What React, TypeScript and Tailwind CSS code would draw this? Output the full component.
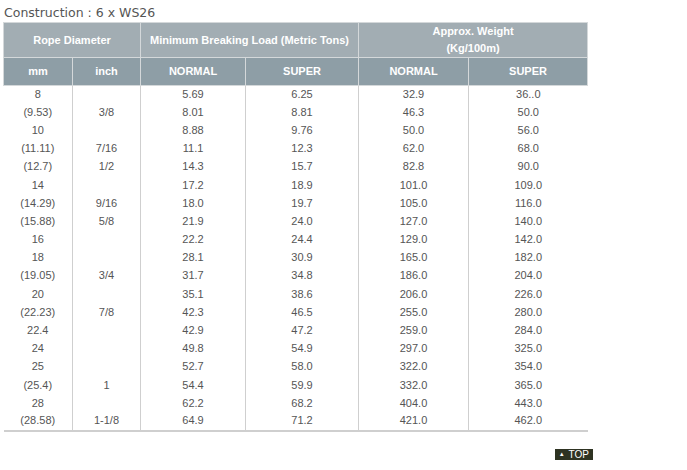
const rows: [string, string, string, string, string, string][] = [
  ["8", "", "5.69", "6.25", "32.9", "36..0"],
  ["(9.53)", "3/8", "8.01", "8.81", "46.3", "50.0"],
  ["10", "", "8.88", "9.76", "50.0", "56.0"],
  ["(11.11)", "7/16", "11.1", "12.3", "62.0", "68.0"],
  ["(12.7)", "1/2", "14.3", "15.7", "82.8", "90.0"],
  ["14", "", "17.2", "18.9", "101.0", "109.0"],
  ["(14.29)", "9/16", "18.0", "19.7", "105.0", "116.0"],
  ["(15.88)", "5/8", "21.9", "24.0", "127.0", "140.0"],
  ["16", "", "22.2", "24.4", "129.0", "142.0"],
  ["18", "", "28.1", "30.9", "165.0", "182.0"],
  ["(19.05)", "3/4", "31.7", "34.8", "186.0", "204.0"],
  ["20", "", "35.1", "38.6", "206.0", "226.0"],
  ["(22.23)", "7/8", "42.3", "46.5", "255.0", "280.0"],
  ["22.4", "", "42.9", "47.2", "259.0", "284.0"],
  ["24", "", "49.8", "54.9", "297.0", "325.0"],
  ["25", "", "52.7", "58.0", "322.0", "354.0"],
  ["(25.4)", "1", "54.4", "59.9", "332.0", "365.0"],
  ["28", "", "62.2", "68.2", "404.0", "443.0"],
  ["(28.58)", "1-1/8", "64.9", "71.2", "421.0", "462.0"],
];

const widths = ["w-[69px]", "w-[68px]", "w-[105px]", "w-[113px]", "w-[110px]", "w-[119px]"];

export default function App() {
  return (
    <div className="w-[687px] h-[470px] bg-white font-['Liberation_Sans',Arial,sans-serif]">
      <div className="pl-[4px] pt-[5px] h-[22px] text-[12.5px] leading-[15px] text-[#555] font-['DejaVu_Sans',sans-serif]">
        Construction : 6 x WS26
      </div>

      <table className="ml-[3px] w-[584px] table-fixed border-collapse text-center">
        <colgroup>
          {widths.map((w) => (
            <col key={w} className={w} />
          ))}
        </colgroup>
        <thead className="text-white text-[11px] font-bold">
          <tr className="bg-[#a2adb3] h-[34px]">
            <th colSpan={2} className="p-0 border border-[#d4d8da] font-bold">
              Rope Diameter
            </th>
            <th colSpan={2} className="p-0 border border-[#d4d8da] font-bold whitespace-nowrap">
              Minimum Breaking Load (Metric Tons)
            </th>
            <th colSpan={2} className="p-0 border border-[#d4d8da] font-bold leading-[17px]">
              Approx. Weight
              <br />
              (Kg/100m)
            </th>
          </tr>
          <tr className="bg-[#8e9ea6] h-[28px]">
            <th className="p-0 border border-[#d4d8da]">mm</th>
            <th className="p-0 border border-[#d4d8da]">inch</th>
            <th className="p-0 border border-[#d4d8da]">NORMAL</th>
            <th className="p-0 border border-[#d4d8da]">SUPER</th>
            <th className="p-0 border border-[#d4d8da]">NORMAL</th>
            <th className="p-0 border border-[#d4d8da]">SUPER</th>
          </tr>
        </thead>
        <tbody className="text-[11px] text-[#555] border-b-2 border-[#cfcfcf]">
          {rows.map((r, i) => (
            <tr key={i} className="h-[18.2px]">
              {r.map((c, j) => (
                <td
                  key={j}
                  className={`p-0 pb-[2px] leading-[14px] ${j < 5 ? "border-r border-[#cfcfcf]" : ""}`}
                >
                  {c}
                </td>
              ))}
            </tr>
          ))}
        </tbody>
      </table>

      <div className="w-[593px] flex justify-end mt-[17px]">
        <div className="bg-[#2e3322] text-white text-[10px] leading-[11px] h-[11px] px-[4px] flex items-center gap-[4px]">
          <span className="text-[6px]">▲</span>
          <span>TOP</span>
        </div>
      </div>
    </div>
  );
}
